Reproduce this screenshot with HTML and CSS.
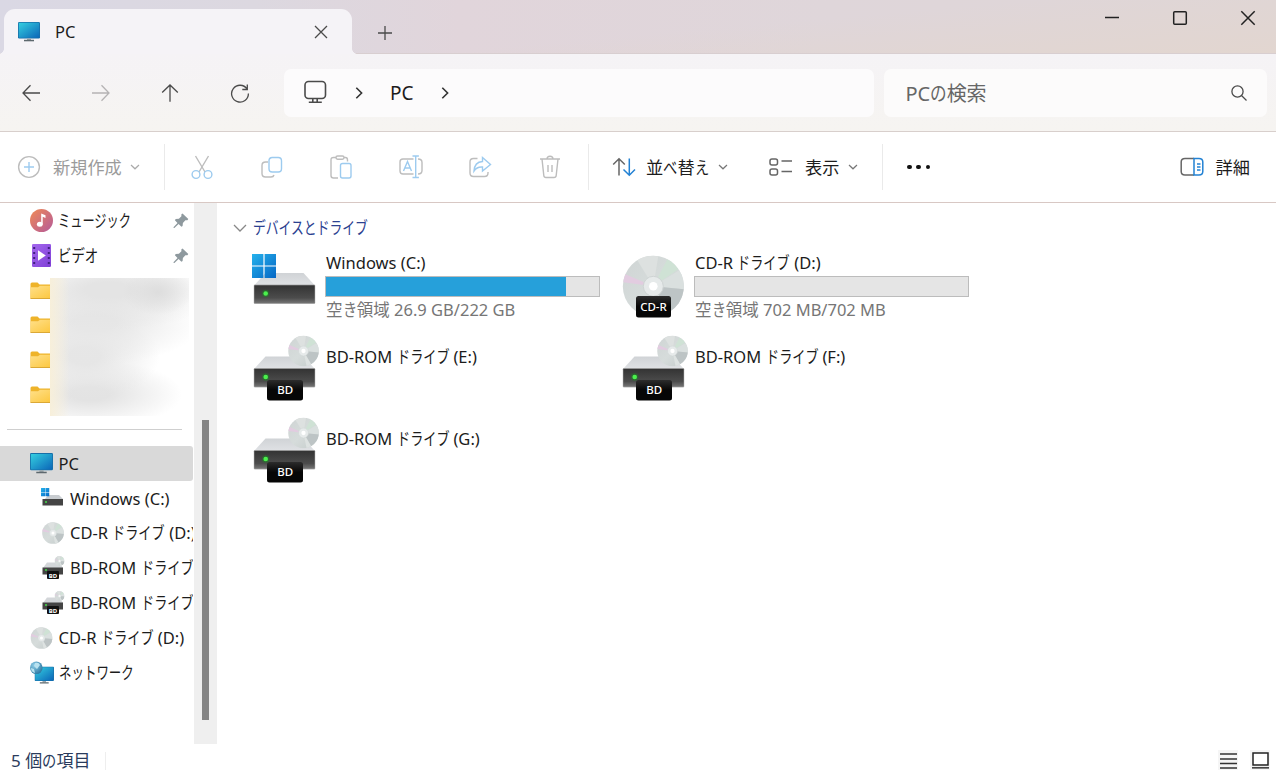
FILE: index.html
```html
<!DOCTYPE html>
<html lang="ja">
<head>
<meta charset="utf-8">
<title>PC</title>
<link rel="stylesheet" href="styles.css">
</head>
<body>
<svg class="defs" width="0" height="0" aria-hidden="true">
  <defs>
    <linearGradient id="gScreen" x1="0" y1="0" x2="1" y2="1"><stop offset="0" stop-color="#35cfe0"/><stop offset="1" stop-color="#0b66b8"/></linearGradient>
    <linearGradient id="gFront" x1="0" y1="0" x2="0" y2="1"><stop offset="0" stop-color="#333"/><stop offset=".7" stop-color="#4c4c4c"/><stop offset="1" stop-color="#777"/></linearGradient>
    <linearGradient id="gTop" x1="0" y1="0" x2="0" y2="1"><stop offset="0" stop-color="#d0d3d6"/><stop offset="1" stop-color="#dfe1e4"/></linearGradient>
    <linearGradient id="gWin" x1="0" y1="0" x2="1" y2="1"><stop offset="0" stop-color="#25b2ec"/><stop offset="1" stop-color="#0667c5"/></linearGradient>
    <linearGradient id="gDisc" x1="0" y1="0" x2="1" y2="1"><stop offset="0" stop-color="#cfd4d4"/><stop offset=".5" stop-color="#d6dcdb"/><stop offset="1" stop-color="#c4cbcb"/></linearGradient>
    <linearGradient id="gFolder" x1="0" y1="0" x2="1" y2="1"><stop offset="0" stop-color="#ffe08a"/><stop offset="1" stop-color="#fcc63c"/></linearGradient>
    <linearGradient id="gMusic" x1="0" y1="0" x2="1" y2="1"><stop offset="0" stop-color="#f08a55"/><stop offset="1" stop-color="#b45a9a"/></linearGradient>
    <linearGradient id="gVideo" x1="0" y1="0" x2="1" y2="1"><stop offset="0" stop-color="#a468ee"/><stop offset="1" stop-color="#7f3fd6"/></linearGradient>
    <linearGradient id="gLabel" x1="0" y1="0" x2="0" y2="1"><stop offset="0" stop-color="#2c2c2c"/><stop offset=".5" stop-color="#060606"/></linearGradient>
    <radialGradient id="gGlobe" cx=".35" cy=".3" r=".8"><stop offset="0" stop-color="#8fcfe8"/><stop offset="1" stop-color="#24709c"/></radialGradient>
    <symbol id="monitor" viewBox="0 0 22 20"><rect x="0" y="0" width="22" height="16.5" rx="1.2" fill="#176fa8"/><rect x=".8" y=".8" width="20.4" height="14.9" rx=".6" fill="url(#gScreen)"/><path d="M9 16.5h4v1.7H9z" fill="#9aa4aa"/><path d="M6 17.8h10v1.5H6z" fill="#5d686e"/></symbol>
    <symbol id="disc" viewBox="0 0 62 62">
      <circle cx="31" cy="31" r="30.5" fill="url(#gDisc)"/>
      <path d="M31 31L3 19A30.5 30.5 0 0 0 1 27z" fill="#e2cce0"/>
      <path d="M31 31L15 5A30.5 30.5 0 0 1 36 1z" fill="#dde1e0"/>
      <path d="M31 31L45 4A30.5 30.5 0 0 1 56 14z" fill="#cfe2d5"/>
      <path d="M31 31L57 15A30.5 30.5 0 0 1 61.5 34z" fill="#dae0df"/>
      <path d="M31 31L61.5 34A30.5 30.5 0 0 1 46 57z" fill="#bdc4c5"/>
      <path d="M31 31L46 57A30.5 30.5 0 0 1 37 61z" fill="#dde2e1"/>
      <circle cx="31" cy="31" r="10" fill="#e6eaea" stroke="#cfd4d4"/>
      <circle cx="31" cy="31" r="4.3" fill="#fff"/>
    </symbol>
    <symbol id="drive" viewBox="0 0 62 33"><path d="M1 13L12 1H50L61 13z" fill="url(#gTop)"/><rect x=".5" y="13" width="61" height="18.5" rx=".8" fill="url(#gFront)" stroke="#999" stroke-width=".7"/><circle cx="12.2" cy="21.5" r="3.8" fill="#168b20" opacity=".45"/><circle cx="12.2" cy="21.5" r="2.3" fill="#4af04c"/></symbol>
    <symbol id="winlogo" viewBox="0 0 24 24"><path d="M0 0h11.4v11.4H0zM12.6 0H24v11.4H12.6zM0 12.6h11.4V24H0zM12.6 12.6H24V24H12.6z" fill="url(#gWin)"/></symbol>
    <symbol id="bdSmall" viewBox="0 0 24 24"><path d="M2 12L6 6.500H18L22 12z" fill="#d3d6d9"/><rect x="1.500" y="11.500" width="20.500" height="7" fill="#444"/><circle cx="5" cy="14" r="1" fill="#43dc48"/><use href="#disc" x="13.500" y="0" width="10" height="10"/><rect x="6" y="15" width="12" height="8" rx="1" fill="#111"/><text x="12" y="21.500" text-anchor="middle" class="tiny">BD</text></symbol>
    <symbol id="bdLarge" viewBox="0 0 72 82"><use href="#drive" x="3.500" y="27.500" width="62" height="33"/><use href="#disc" x="38" y="7.500" width="31" height="31"/><rect x="17" y="52" width="36" height="20.500" rx="2.500" fill="url(#gLabel)"/><text x="35.200" y="66.300" text-anchor="middle" class="badge">BD</text></symbol>
    <symbol id="folder" viewBox="0 0 24 18"><path d="M.5 2Q.5.500 2 .500H7.500L9.500 2.500H23.500V16.500H.5z" fill="#eeb32a"/><path d="M.5 5.200H8L10 3.800H23.500V16H.5z" fill="url(#gFolder)"/><path d="M.5 16h23v.9H.5z" fill="#d9a32c"/></symbol>
    <symbol id="pin" viewBox="0 0 16 16"><path d="M9.500.600L15.300 6 14.400 7.200 12.400 7.300 9.900 9.900 9.600 12.900 8.400 13.700 5.600 11 1.400 15 .500 14.900.700 14 4.500 9.900 1.900 7.200 2.700 6.100 5.900 5.700 8.400 3.200 8.400 1.200z" fill="#8e999e"/></symbol>
    <symbol id="caret" viewBox="0 0 10 6"><path d="M1 1l4 3.800L9 1" fill="none" stroke="currentColor" stroke-width="1.200"/></symbol>
    <symbol id="chev" viewBox="0 0 8 14"><path d="M1.300 1.800L6.600 7l-5.300 5.200" fill="none" stroke="currentColor" stroke-width="1.600"/></symbol>
  </defs>
</svg>

<header class="tabstrip">
  <div class="tab">
    <svg class="tab-icon" width="22" height="20"><use href="#monitor"/></svg>
    <span class="tab-title">PC</span>
    <svg class="tab-close line" viewBox="0 0 14 14" width="14" height="14"><path d="M1 1l12 12M13 1L1 13"/></svg>
  </div>
  <svg class="tab-new line" viewBox="0 0 16 16" width="16" height="16"><path d="M8 1v14M1 8h14"/></svg>
  <div class="controls">
    <svg class="line dark" viewBox="0 0 16 16" width="16" height="16"><path d="M1 7.500h14"/></svg>
    <svg class="line dark" viewBox="0 0 16 16" width="16" height="16"><rect x="1.700" y="1.700" width="12.600" height="12.600" rx="1"/></svg>
    <svg class="line dark" viewBox="0 0 16 16" width="16" height="16"><path d="M1.300 1.300l13.400 13.400M14.700 1.300L1.300 14.700"/></svg>
  </div>
</header>

<nav class="navbar">
  <div class="navbuttons">
    <svg class="line" viewBox="0 0 20 20" width="20" height="20"><path d="M19 10H2M9.500 2.200L2 10l7.500 7.800"/></svg>
    <svg class="line faded" viewBox="0 0 20 20" width="20" height="20"><path d="M1 10h17M10.500 2.200L18 10l-7.500 7.800"/></svg>
    <svg class="line" viewBox="0 0 20 20" width="20" height="20"><path d="M10 18.800V2M2.200 9.500L10 2l7.800 7.500"/></svg>
    <svg class="line" viewBox="0 0 20 20" width="20" height="20"><path d="M17 6A8.400 8.400 0 1 0 18.400 10.500M17.300 1.500V6.500h-5"/></svg>
  </div>
  <div class="address">
    <svg class="line pcglyph" viewBox="0 0 24 24" width="24" height="24"><rect x="2" y="1.500" width="20.500" height="17" rx="3.500"/><path d="M9.800 18.500v3.500M14.200 18.500v3.500M5.800 22.300h13"/></svg>
    <svg class="chev" width="8" height="14"><use href="#chev"/></svg>
    <span class="crumb">PC</span>
    <svg class="chev" width="8" height="14"><use href="#chev"/></svg>
  </div>
  <div class="search"><span>PC<span class="k n1">の</span>検索</span>
    <svg class="line" viewBox="0 0 16 16" width="16" height="16"><circle cx="6.500" cy="6.500" r="5.600"/><path d="M10.500 10.500l5 5"/></svg>
  </div>
</nav>

<div class="toolbar">
  <div class="cmd new off">
    <svg class="ic" viewBox="0 0 24 24" width="24" height="24"><circle cx="12" cy="12" r="10.400"/><path class="b" d="M12 7v10M7 12h10"/></svg>
    <span>新規作成</span><svg class="caret" width="10" height="6"><use href="#caret"/></svg>
  </div>
  <div class="icons off">
    <svg class="ic" viewBox="0 0 24 26" width="24" height="26"><path d="M5.500 2l9.500 16M18.500 2L9 18"/><circle class="b" cx="6" cy="20.500" r="3.900"/><circle class="b" cx="18" cy="20.500" r="3.900"/></svg>
    <svg class="ic" viewBox="0 0 24 26" width="24" height="26"><path d="M8 8H5.500Q2 8 2 11.500v8Q2 23 5.500 23H11q2.500 0 3-2"/><rect class="b" x="9" y="3.500" width="12.500" height="14.500" rx="3.200"/></svg>
    <svg class="ic" viewBox="0 0 24 26" width="24" height="26"><path d="M7 3.500H4.500Q2 3.500 2 6v15.500Q2 24 4.500 24H9M15 3.500h1.500Q18.500 3.500 18.500 6v1.500"/><rect x="7" y="2" width="8" height="3.200" rx="1.600"/><rect class="b" x="11.500" y="9.500" width="10.500" height="14.500" rx="2"/></svg>
    <svg class="ic" viewBox="0 0 24 26" width="24" height="26"><path d="M14.500 5H4Q1 5 1 8v9q0 3 3 3h10.500M19 5q4 0 4 3.500v8q0 3.500-4 3.500"/><path class="b" d="M4.500 17L8.500 7.500l4 9.500M6 14h5.500M16.700 2v21.500M13.500 2h6.400M13.500 23.500h6.400"/></svg>
    <svg class="ic" viewBox="0 0 24 26" width="24" height="26"><path d="M9.500 4.500H5.500Q2 4.500 2 8v11q0 3.500 3.500 3.500h11Q20 22.500 20 19v-1"/><path class="b" d="M14.500 3.500l8 7-8 6.500v-4Q9 12.500 6 17 6.500 8 14.500 7.500z"/></svg>
    <svg class="ic" viewBox="0 0 24 26" width="24" height="26"><path d="M2 5h20M9 5q0-2.800 3-2.800T15 5M4 5l1.800 16.500Q6 23.500 8 23.500h8q2 0 2.200-2L20 5M10 11v7M14 11v7"/></svg>
  </div>
  <div class="cmd sort">
    <svg class="ic" viewBox="0 0 24 20" width="24" height="20"><path d="M7 18.500V2M1.200 7.500L7 1.800l5.800 5.700"/><path class="b" d="M17.300 1.500v16.500M11.500 12.500l5.800 5.700 5.700-5.700"/></svg>
    <span>並<span class="k n1">べ</span>替<span class="k n1">え</span></span><svg class="caret" width="10" height="6"><use href="#caret"/></svg>
  </div>
  <div class="cmd view">
    <svg class="ic" viewBox="0 0 24 20" width="24" height="20"><rect x="1" y="2" width="7.500" height="6" rx="2"/><rect x="1" y="12" width="7.500" height="6" rx="2"/><path d="M12.500 4H23M12.500 14.500H23"/></svg>
    <span>表示</span><svg class="caret" width="10" height="6"><use href="#caret"/></svg>
  </div>
  <div class="more"><i></i><i></i><i></i></div>
  <div class="cmd details">
    <svg class="ic" viewBox="0 0 24 20" width="24" height="20"><path d="M14 1.500H5Q1.200 1.500 1.200 5v9.500Q1.200 18 5 18h9"/><path class="b" d="M14 1.500h5Q22.800 1.500 22.800 5v9.500Q22.800 18 19 18h-5zM17 7h3.500M17 10h3.500M17 13h3.500"/></svg>
    <span>詳細</span>
  </div>
</div>

<div class="body">
  <aside class="sidebar">
    <div class="row"><svg width="23" height="23" viewBox="0 0 23 23"><circle cx="11.500" cy="11.500" r="11.500" fill="url(#gMusic)"/><ellipse cx="9.800" cy="15.300" rx="2.900" ry="2.500" fill="#fff"/><path d="M11.200 15.500V4.500l4.300 1.800v2.600l-2.800-1.200v7.800z" fill="#fff"/></svg><span class="k n6 s71">ミュージック</span><svg class="pin" width="16" height="16"><use href="#pin"/></svg></div>
    <div class="row"><svg width="23" height="23" viewBox="0 0 23 23"><rect x="2" width="19" height="23" rx="1.200" fill="url(#gVideo)"/><path d="M8 6.300v10.400l7.800-5.200z" fill="#fff"/><path d="M3.200 3h2v2h-2zM3.200 8h2v2h-2zM3.200 13h2v2h-2zM3.200 18h2v2h-2zM17.800 3h2v2h-2zM17.800 8h2v2h-2zM17.800 13h2v2h-2zM17.800 18h2v2h-2z" fill="#402080"/></svg><span class="k n3">ビデオ</span><svg class="pin" width="16" height="16"><use href="#pin"/></svg></div>
    <div class="private">
      <div class="folders">
        <svg width="24" height="18"><use href="#folder"/></svg>
        <svg width="24" height="18"><use href="#folder"/></svg>
        <svg width="24" height="18"><use href="#folder"/></svg>
        <svg width="24" height="18"><use href="#folder"/></svg>
      </div>
      <div class="mosaic"></div>
    </div>
    <div class="sep"></div>
    <div class="row selected"><svg width="23" height="21"><use href="#monitor"/></svg><span>PC</span></div>
    <div class="row sub"><svg width="24" height="24" viewBox="0 0 24 24"><path d="M4 12L7 8H18L22 12z" fill="#c8ccd0"/><rect x="1.500" y="12" width="20.500" height="6.500" fill="#444"/><circle cx="5" cy="15" r="1" fill="#43dc48"/><use href="#winlogo" x="0" y="1" width="8.500" height="8.500"/></svg><span>Windows (C:)</span></div>
    <div class="row sub"><svg width="24" height="22"><use href="#disc"/></svg><span>CD-R <span class="k n4">ドライブ</span> (D:)</span></div>
    <div class="row sub"><svg width="24" height="24"><use href="#bdSmall"/></svg><span>BD-ROM <span class="k n4">ドライブ</span></span></div>
    <div class="row sub"><svg width="24" height="24"><use href="#bdSmall"/></svg><span>BD-ROM <span class="k n4">ドライブ</span></span></div>
    <div class="row"><svg width="23" height="22"><use href="#disc"/></svg><span>CD-R <span class="k n4">ドライブ</span> (D:)</span></div>
    <div class="row"><svg width="24" height="24" viewBox="0 0 24 24"><use href="#monitor" x="4.500" y="5.500" width="19.500" height="17.700"/><circle cx="6.300" cy="6.800" r="6.300" fill="url(#gGlobe)"/><path d="M5 2q4-1 5 2L7 8 4 5zM1 7l3 1 1 4Q1 11 1 7z" fill="#b9e2ef"/></svg><span class="k n6 s73">ネットワーク</span></div>
  </aside>
  <div class="scroll"><div class="thumb"></div></div>
  <main class="content">
    <h2 class="group"><svg width="14" height="8" viewBox="0 0 14 8"><path d="M1 1l6 6 6-6" fill="none" stroke="#888" stroke-width="1.300"/></svg><span class="k n9">デバイスとドライブ</span></h2>
    <div class="tiles">
      <div class="tile usage">
        <svg width="72" height="82" viewBox="0 0 72 82"><use href="#drive" x="3.500" y="26" width="62" height="33"/><use href="#winlogo" x="2" y="8" width="24" height="24"/></svg>
        <div class="info"><div class="name">Windows (C:)</div><div class="bar"><div class="fill"></div></div><div class="free">空<span class="k n1">き</span>領域 26.9 GB/222 GB</div></div>
      </div>
      <div class="tile usage">
        <svg width="72" height="82" viewBox="0 0 72 82"><use href="#disc" x="3.300" y="9.300" width="62" height="62"/><rect x="17" y="50" width="35" height="21.500" rx="2.500" fill="url(#gLabel)"/><text x="34.500" y="64.500" text-anchor="middle" class="badge">CD-R</text></svg>
        <div class="info"><div class="name">CD-R <span class="k n4">ドライブ</span> (D:)</div><div class="bar"></div><div class="free">空<span class="k n1">き</span>領域 702 MB/702 MB</div></div>
      </div>
      <div class="tile"><svg width="72" height="82"><use href="#bdLarge"/></svg><div class="info"><div class="name">BD-ROM <span class="k n4">ドライブ</span> (E:)</div></div></div>
      <div class="tile"><svg width="72" height="82"><use href="#bdLarge"/></svg><div class="info"><div class="name">BD-ROM <span class="k n4">ドライブ</span> (F:)</div></div></div>
      <div class="tile"><svg width="72" height="82"><use href="#bdLarge"/></svg><div class="info"><div class="name">BD-ROM <span class="k n4">ドライブ</span> (G:)</div></div></div>
    </div>
  </main>
</div>

<footer class="status">
  <span class="count">5 個<span class="k n1">の</span>項目</span>
  <svg width="20" height="20" viewBox="0 0 20 20"><path d="M2 4h17M2 9h17M2 13.500h17M2 18h17" stroke="#333" stroke-width="1.500"/></svg>
  <svg width="20" height="20" viewBox="0 0 20 20"><path d="M3 3h15v12H3z" fill="#fff" stroke="#222" stroke-width="1.500"/><path d="M2 17.800h17" stroke="#444" stroke-width="1.700"/></svg>
</footer>
</body>
</html>
```
FILE: styles.css
```css
* { box-sizing: border-box; }
body {
  margin: 0; width: 1276px; height: 774px; overflow: hidden;
  display: flex; flex-direction: column; background: #fff; color: #1c1c1c;
  font: 16.5px/24px "Noto Sans", "Noto Sans CJK JP", sans-serif;
}
.defs { position: absolute; }
svg { display: block; flex: none; }

/* Condensed kana */
.k { --s: .745; --n: 1; display: inline-block; width: calc(var(--n) * var(--s) * 17.2px); font-size: 17.2px; white-space: nowrap; transform: scaleX(var(--s)); transform-origin: left; font-family: "Noto Sans CJK JP", sans-serif; line-height: 20px; }
.n1 { --s: .83; }
.n3 { --n: 3; --s: .78; }
.n4 { --n: 4; --s: .765; }
.n6 { --n: 6; }
.n9 { --n: 9; }
.s71 { --s: .71; }
.s73 { --s: .725; }

.line { fill: none; stroke: #4a4a4a; stroke-width: 1.3; }
.line.dark { stroke: #222; stroke-width: 1.5; }
.line.faded { stroke: #b5b3b4; }

.tabstrip { height: 54px; display: flex; align-items: flex-start; background: linear-gradient(175deg, rgba(226,214,208,0) 55%, #e2d6d0 100%), linear-gradient(90deg, #dad8e4 0, #dcd8e0 20%, #e1d5db 36%, #dfd6da 65%, #dfd6d6 100%); box-shadow: inset 0 -1px #d8ced0; }
.tab { position: relative; margin: 9px 0 0 4px; width: 348px; height: 45px; padding: 0 24px 0 14px; display: flex; align-items: center; border-radius: 11px 11px 0 0; background: #f5f3f7; }
.tab::before, .tab::after { content: ""; position: absolute; bottom: 0; width: 5px; height: 5px; }
.tab::before { left: -5px; background: radial-gradient(circle at 0 0, transparent 4.5px, #f5f3f7 5px); }
.tab::after { right: -5px; background: radial-gradient(circle at 100% 0, transparent 4.5px, #f5f3f7 5px); }
.tab-icon { margin-top: 1px; }
.tab-title { margin-left: 15px; flex: 1; }
.tab-new { margin: 25px 0 0 25px; }
.controls { margin: 10px 20px 0 auto; display: flex; gap: 52px; }

.navbar { height: 78px; padding: 15px 9px 0 21px; display: flex; align-items: flex-start; background: linear-gradient(#f5f3f6, #f6f4f1); border-bottom: 1px solid #d8cfcc; font-size: 19px; }
.navbuttons { width: 263px; height: 48px; display: flex; align-items: center; gap: 49.6px; }
.address { width: 590px; height: 48px; padding: 0 19px; display: flex; align-items: center; background: #fcfbfc; border-radius: 7px; }
.pcglyph { stroke-width: 1.6; margin-top: -2px; }
.chev { color: #333; margin-left: 28px; }
.crumb { margin-left: 27px; }
.crumb + .chev { margin-left: 27px; }
.search { margin-left: 10px; width: 383px; height: 48px; padding: 0 20px 0 21.500px; display: flex; align-items: center; justify-content: space-between; background: #fcfbfb; border-radius: 7px; color: #666; }
.search .k { font-size: 20px; width: 16.600px; }
.search > span { font-size: 20px; letter-spacing: -.1px; padding-top: 1px; }

.toolbar { height: 71px; padding: 0 26px 0 17px; display: flex; align-items: center; border-bottom: 1px solid #d8c8c4; font-size: 17.2px; }
.ic { fill: none; stroke: #666; stroke-width: 1.5; }
.ic .b { stroke: #2382d4; }
.off .ic { stroke: #bdbdbd; stroke-width: 1.4; }
.off .ic .b { stroke: #9dcbef; }
.cmd { display: flex; align-items: center; white-space: nowrap; }
.cmd > span { padding-top: 1px; }
.caret { color: #777; margin-left: 9px; }
.new { width: 148px; height: 46px; color: #9b9b9b; border-right: 1px solid #eaeaea; }
.new span { margin-left: 12px; }
.new .caret { color: #aaa; margin-left: 8px; }
.icons { width: 424px; height: 46px; padding-left: 25px; display: flex; align-items: center; gap: 45.6px; border-right: 1px solid #eaeaea; }
.sort { margin-left: 22.500px; width: 157.500px; }
.sort > span { margin-left: 10.500px; }
.view > span { margin-left: 12px; }
.view { width: 114px; height: 46px; border-right: 1px solid #eaeaea; }
.view .caret { margin-left: 9px; }
.more { margin-left: 24px; display: flex; gap: 4.500px; }
.more i { width: 4.800px; height: 4.800px; border-radius: 50%; background: #111; }
.details { margin-left: auto; gap: 12px; }

.body { flex: 1; display: flex; min-height: 0; }
.sidebar { width: 194px; overflow: hidden; padding-top: .500px; }
.row { height: 34.8px; width: 193px; padding-left: 29.500px; display: flex; align-items: center; gap: 6px; overflow: hidden; white-space: nowrap; }
.row > .k { margin: -1px 0 0 -1px; }
.row.sub { padding-left: 40.500px; gap: 5.500px; }
.pin { margin: 0 4px 0 auto; }
.private { height: 143px; padding: 5px 0 0 30px; display: flex; }
.folders { width: 20px; overflow: hidden; padding-top: 3.500px; display: flex; flex-direction: column; gap: 16.8px; }
.mosaic { width: 139px; height: 138px; background:
  linear-gradient(90deg, #f7efda 0, rgba(247,239,218,0) 14%),
  radial-gradient(ellipse 36px 23px at 108px 14px, #dddddd, rgba(225,225,225,0)),
  radial-gradient(ellipse 115px 40px at 58px 12px, #e4e4e4 20%, rgba(230,230,230,0)),
  radial-gradient(ellipse 105px 42px at 45px 45px, #e7e7e7 20%, rgba(235,235,235,0)),
  radial-gradient(ellipse 75px 44px at 35px 78px, #e6e6e6 20%, rgba(235,235,235,0)),
  radial-gradient(ellipse 92px 34px at 40px 116px, #e3e3e3 20%, rgba(235,235,235,0)); }
.sep { height: 1px; width: 175px; margin: 12.900px 0 16.500px 7px; background: #cfcfcf; }
.selected { background: #d9d9d9; border-radius: 0 3px 3px 0; }
.scroll { width: 23px; background: #efefef; padding: 217px 0 0 8px; }
.thumb { width: 7px; height: 300px; background: #858585; }

.content { flex: 1; padding-left: 16px; }
.group { margin: 13px 0 0; height: 24px; display: flex; align-items: center; gap: 6px; font-size: 17px; font-weight: 400; color: #2c4190; }
.group .k { margin-top: -2px; }
.tiles { margin: 6px 0 0 17px; display: grid; grid-template-columns: 369px 369px; grid-auto-rows: 82px; }
.tile { display: flex; }
.info { width: 275px; margin-left: 3px; padding-top: 17px; }
.name { height: 24px; padding-left: 1px; white-space: nowrap; }
.usage .info { padding-top: 5px; }
.bar { margin-top: 1px; height: 21px; border: 1px solid #bcbcbc; background: #e5e5e5; }
.fill { width: 240px; height: 100%; background: #26a0da; }
.free { margin-top: 1px; padding-left: 1px; color: #767676; white-space: nowrap; }
.badge { font: 500 11.5px "Noto Sans", sans-serif; fill: #fff; }
.tiny { font: 700 6px "Noto Sans", sans-serif; fill: #fff; }

.status { height: 30px; padding: 2px 6px 0 11px; display: flex; align-items: center; gap: 12px; color: #2a3b5c; }
.count { width: 95px; height: 18px; line-height: 18px; margin: 2px auto 0 0; border-right: 1px solid #eee; white-space: nowrap; font-size: 17px; }
.count .k { line-height: 16px; }
.status svg { background: #f5f5f5; }
```
